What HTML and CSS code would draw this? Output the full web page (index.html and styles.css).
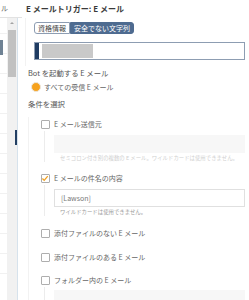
FILE: index.html
```html
<!DOCTYPE html>
<html lang="ja">
<head>
    <meta charset="UTF-8">
    <meta name="viewport" content="width=device-width, initial-scale=1.0">
    <title>Eメールトリガー</title>
    <link rel="stylesheet" href="styles.css">
</head>
<body>
    <div class="app">
        <div class="sidebar">
            <div class="sidebar-head">ル</div>
            <div class="sidebar-body">
                <div class="list">
                    <div class="list-item first"></div>
                    <div class="list-item active"><div class="active-mark"></div></div>
                    <div class="list-item"></div>
                    <div class="list-item"></div>
                    <div class="list-item"></div>
                    <div class="list-item"></div>
                    <div class="list-item"></div>
                    <div class="list-item"></div>
                    <div class="list-item"></div>
                    <div class="list-item"></div>
                    <div class="list-item"></div>
                    <div class="list-item"></div>
                    <div class="list-item"></div>
                </div>
                <div class="scrollbar">
                    <div class="scroll-arrow"></div>
                    <div class="scroll-thumb"></div>
                    <div class="splitter-mark"></div>
                </div>
            </div>
        </div>

        <div class="main">
            <div class="title">E メールトリガー: E メール</div>

            <div class="source">
                <div class="tabs">
                    <div class="tab">資格情報</div>
                    <div class="tab tab-active">安全でない文字列</div>
                </div>
                <div class="field">
                    <div class="field-mark"></div>
                    <div class="redact"></div>
                </div>
            </div>

            <div class="trigger">
                <div class="label">Bot を起動する E メール</div>
                <div class="radio-row">
                    <span class="radio"></span>
                    <span>すべての受信 E メール</span>
                </div>
                <div class="label section-label">条件を選択</div>
            </div>

            <div class="conditions">
                <div class="check-row first-row">
                    <span class="check"></span>
                    <span>E メール送信元</span>
                </div>
                <div class="sub">
                    <div class="box box-grey"></div>
                    <div class="hint hint-light">セミコロン付き別の複数の E メール。ワイルドカードは使用できません。</div>
                </div>

                <div class="check-row row-2">
                    <span class="check checked">
                        <svg width="9" height="9" viewBox="0 0 9 9"><path d="M1.6 4.6 L3.6 6.6 L7.6 1.8" fill="none" stroke="#f0a122" stroke-width="1.5"/></svg>
                    </span>
                    <span>E メールの件名の内容</span>
                </div>
                <div class="sub">
                    <div class="box box-input">[Lawson]</div>
                    <div class="hint">ワイルドカードは使用できません。</div>
                </div>

                <div class="check-row row-3">
                    <span class="check"></span>
                    <span>添付ファイルのない E メール</span>
                </div>
                <div class="check-row row-4">
                    <span class="check"></span>
                    <span>添付ファイルのある E メール</span>
                </div>
                <div class="check-row row-5">
                    <span class="check"></span>
                    <span>フォルダー内の E メール</span>
                </div>
                <div class="sub sub-last">
                    <div class="box box-grey tall"></div>
                </div>
            </div>
        </div>
    </div>
</body>
</html>
```

FILE: styles.css
```css
body {
    margin: 0;
    padding: 0;
    background: white;
    font-family: 'Noto Sans CJK JP', 'Noto Sans', sans-serif;
    color: #555;
    width: 249px;
    height: 300px;
    overflow: hidden;
}

.app {
    display: flex;
    height: 300px;
}

/* left list panel */
.sidebar {
    width: 22px;
    display: flex;
    flex-direction: column;
    flex-shrink: 0;
}

.sidebar-head {
    height: 18px;
    border-bottom: 1px solid #e2e2e2;
    box-sizing: border-box;
    font-size: 7px;
    line-height: 17px;
    color: #666;
    padding-left: 1px;
}

.sidebar-body {
    flex: 1;
    display: flex;
    width: 18px;
}

.list {
    width: 7px;
    display: flex;
    flex-direction: column;
    overflow: hidden;
}

.list-item {
    height: 20px;
    flex-shrink: 0;
    border-bottom: 1px solid #f1f1f1;
    box-sizing: border-box;
}

.list-item.first {
    height: 16px;
}

.active-mark {
    margin-top: 6px;
    width: 3px;
    height: 15px;
    background: #6f8294;
}

.scrollbar {
    width: 10px;
    background: #f1f1f1;
    border-right: 1px solid #d6e2ec;
    display: flex;
    flex-direction: column;
}

.scroll-arrow {
    height: 10px;
}

.scroll-arrow::after {
    content: "";
    display: block;
    margin: 4px auto 0;
    width: 0;
    height: 0;
    border-left: 2px solid transparent;
    border-right: 2px solid transparent;
    border-bottom: 2px solid #a3a3a3;
}

.scroll-thumb {
    margin: 2px 1px 0 1px;
    height: 47px;
    background: #c1c1c1;
}

.splitter-mark {
    margin-top: 53px;
    align-self: flex-end;
    width: 2px;
    height: 15px;
    background: #233f63;
}

/* main form */
.main {
    flex: 1;
    padding-right: 4px;
}

.title {
    height: 18px;
    line-height: 18px;
    padding-left: 4px;
    font-size: 8px;
    font-weight: 600;
    color: #3a3a3a;
    white-space: nowrap;
}

.source {
    margin-left: 3px;
    border-left: 1px solid #f2f2f2;
    padding: 4px 0 6px 8px;
}

.tabs {
    display: flex;
    height: 12px;
}

.tab {
    font-size: 7px;
    line-height: 10px;
    padding: 0 3px;
    border: 1px solid #8d9db2;
    color: #444;
    background: white;
    border-radius: 3px 0 0 3px;
}

.tab-active {
    background: #4e6b90;
    border-color: #4e6b90;
    color: white;
    border-radius: 0 3px 3px 0;
}

.field {
    margin-top: 8px;
    height: 18px;
    box-sizing: border-box;
    border: 1px solid #8d9db2;
    display: flex;
}

.field-mark {
    width: 4px;
    background: #1f3c62;
}

.redact {
    margin: 1px 0 1px 3px;
    width: 51px;
    background: #c9c9c9;
}

.trigger {
    padding-left: 6px;
    margin-top: 1px;
}

.label {
    font-size: 7.4px;
    line-height: 12px;
    color: #555;
}

.radio-row {
    margin-top: 3px;
    padding-left: 3px;
    height: 10px;
    display: flex;
    align-items: center;
    gap: 3px;
    font-size: 7px;
    color: #666;
}

.radio {
    width: 10px;
    height: 10px;
    box-sizing: border-box;
    border-radius: 50%;
    background: #f6a21e;
    border: 1.5px solid #ece6dc;
}

.section-label {
    margin-top: 6px;
}

.conditions {
    margin-left: 6px;
    border-left: 1px solid #f2f2f2;
    padding-left: 12px;
}

.check-row {
    height: 14px;
    display: flex;
    align-items: center;
    gap: 4px;
    font-size: 7px;
    color: #666;
    white-space: nowrap;
}

.first-row { margin-top: 7px; }
.row-2 { margin-top: 9px; }
.row-3 { margin-top: 10px; }
.row-4 { margin-top: 10px; }
.row-5 { margin-top: 9px; }

.check {
    width: 9px;
    height: 9px;
    box-sizing: border-box;
    border: 1px solid #aeaeae;
    border-radius: 1px;
    background: white;
    display: flex;
}

.check svg {
    margin: -1px 0 0 -1px;
}

.sub {
    margin-left: 3px;
    border-left: 1px solid #ececec;
    padding-left: 9px;
    padding-top: 4px;
}

.sub-last {
    padding-top: 3px;
}

.box {
    height: 18px;
    box-sizing: border-box;
}

.box-grey {
    background: #f7f7f7;
}

.box-grey.tall {
    height: 20px;
}

.box-input {
    border: 1px solid #e0e0e0;
    background: white;
    font-size: 7px;
    line-height: 16px;
    padding-left: 6px;
    color: #777;
}

.hint {
    margin-top: 1px;
    padding-left: 6px;
    font-size: 5.4px;
    line-height: 8px;
    color: #9a9a9a;
    white-space: nowrap;
}

.hint-light {
    color: #d0d0d0;
}
```
